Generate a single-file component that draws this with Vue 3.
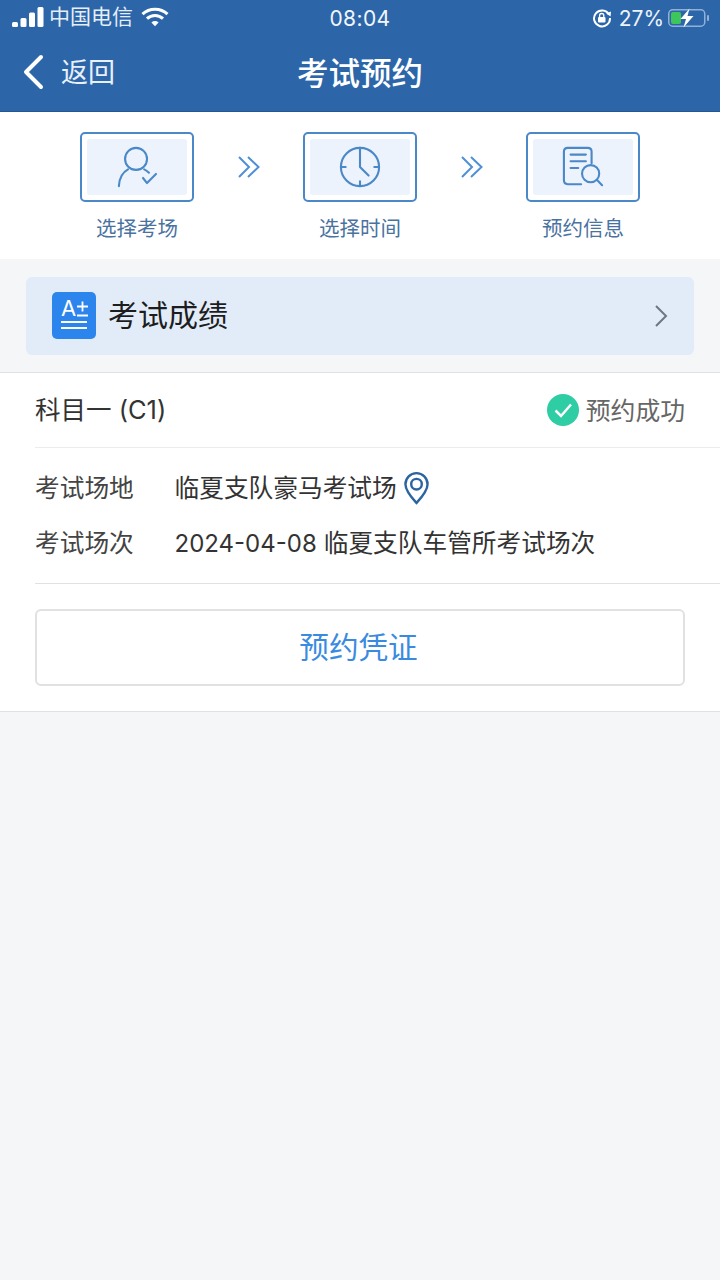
<template>
  <div class="page">
    <header class="topbar">
      <div class="status">
        <div class="status-left">
          <svg class="signal" width="32" height="20" viewBox="0 0 32 20">
            <rect x="0" y="15" width="6" height="5" rx="1.5" />
            <rect x="8.5" y="11" width="6" height="9" rx="1.5" />
            <rect x="17" y="5.5" width="6" height="14.5" rx="1.5" />
            <rect x="25.5" y="0" width="6" height="20" rx="1.5" />
          </svg>
          <span class="carrier">中国电信</span>
          <svg class="wifi" width="28" height="20" viewBox="0 0 28 20">
            <path d="M1.5 7.2C8.5 .6 19.5 .6 26.5 7.2" />
            <path d="M6 11.6C10.6 7.3 17.4 7.3 22 11.6" />
            <path d="M10.4 15.4C12.5 13.6 15.5 13.6 17.6 15.4L14 19.2Z" class="wifi-tip" />
          </svg>
        </div>
        <span class="clock">08:04</span>
        <div class="status-right">
          <svg class="lock" width="20" height="20" viewBox="0 0 20 20">
            <path d="M17 6.5A8 8 0 1 0 18 10" fill="none" stroke="#fff" stroke-width="2" />
            <path d="M14.2 5.4L19 3.4L18.6 8.6Z" fill="#fff" />
            <rect x="6" y="9" width="7.5" height="5.5" rx="1" fill="#fff" />
            <path d="M7.6 9V7.6a2.1 2.1 0 0 1 4.2 0V9" fill="none" stroke="#fff" stroke-width="1.3" />
          </svg>
          <span class="battery-pct">27%</span>
          <svg class="battery" width="42" height="20" viewBox="0 0 42 20">
            <rect x=".75" y="1.75" width="36" height="16.5" rx="4" fill="none" stroke="#8fb0d8" stroke-width="1.5" />
            <rect x="3" y="4" width="10" height="12" rx="2" fill="#3fc65a" />
            <rect x="39" y="7" width="2" height="6" rx="1" fill="#8fb0d8" />
            <path d="M21.5 0.5L12.5 11H18L15.5 19.5L25.5 8H19.5Z" fill="#fff" />
          </svg>
        </div>
      </div>
      <div class="navbar">
        <div class="back">
          <svg width="22" height="36" viewBox="0 0 22 36">
            <path d="M19 3L4 18L19 33" fill="none" stroke="#fff" stroke-width="4" stroke-linecap="round" stroke-linejoin="round" />
          </svg>
          <span>返回</span>
        </div>
        <h1>考试预约</h1>
      </div>
    </header>

    <section class="steps">
      <template v-for="(step, i) in steps" :key="step.label">
        <div class="step">
          <div class="tile">
            <div class="tile-inner">
              <svg v-if="step.icon === 'person'" width="44" height="44" viewBox="0 0 44 44" class="step-icon">
                <circle cx="21" cy="13.500" r="11.500" />
                <path d="M3 42C3.500 33 7 27.500 12.600 24.500" />
                <path d="M29.500 24.500C31.500 25.300 33 26.500 34.500 28" />
                <path d="M28.300 33.500L32.500 38.800L41.900 29.300" />
              </svg>
              <svg v-else-if="step.icon === 'clock'" width="44" height="44" viewBox="0 0 44 44" class="step-icon">
                <circle cx="22" cy="22" r="20" />
                <path d="M22 2V7M22 37V42M2 22H7M37 22H42" />
                <path d="M22 8V22L31 31" />
              </svg>
              <svg v-else width="44" height="44" viewBox="0 0 44 44" class="step-icon">
                <path d="M20 40H6C3.500 40 2 38.500 2 36V6C2 3.500 3.500 2 6 2H27C29.500 2 31 3.500 31 6V18" />
                <path d="M9 9H25M9 16H25M9 23H17" />
                <circle cx="30" cy="29" r="9" />
                <path d="M37 36L42 41" />
              </svg>
            </div>
          </div>
          <span class="step-label">{{ step.label }}</span>
        </div>
        <div v-if="i < steps.length - 1" class="step-arrow">
          <svg width="24" height="24" viewBox="0 0 24 24">
            <path d="M2 2L12 12L2 22M11 2L21.500 12L11 22" fill="none" stroke="#4f8fd6" stroke-width="2" />
          </svg>
        </div>
      </template>
    </section>

    <div class="score-wrap">
      <div class="score-banner">
        <div class="score-left">
          <div class="score-icon">
            <span class="grade">A</span>
            <svg class="plus" width="14" height="18" viewBox="0 0 14 18">
              <path d="M1 5.500H12M6.500 0.500V10.500M1 14.500H12" fill="none" stroke="#fff" stroke-width="1.800" />
            </svg>
            <i class="rule"></i>
            <i class="rule"></i>
          </div>
          <span class="score-title">考试成绩</span>
        </div>
        <svg width="14" height="24" viewBox="0 0 14 24">
          <path d="M2 2L12 12L2 22" fill="none" stroke="#6d7780" stroke-width="2" />
        </svg>
      </div>
    </div>

    <section class="record">
      <div class="record-head">
        <span class="subject">科目一 (C1)</span>
        <div class="state">
          <svg width="32" height="32" viewBox="0 0 32 32">
            <circle cx="16" cy="16" r="16" fill="#2fcda3" />
            <path d="M8.500 16.500L14 22L24 10.500" fill="none" stroke="#fff" stroke-width="2.500" />
          </svg>
          <span>预约成功</span>
        </div>
      </div>
      <div class="record-body">
        <div class="info-row">
          <span class="info-key">考试场地</span>
          <span class="info-val">临夏支队豪马考试场</span>
          <svg class="pin" width="25" height="34" viewBox="0 0 26 34">
            <path d="M13 32.500C8 27 1.500 20 1.500 13A11.500 11.500 0 0 1 24.500 13C24.500 20 18 27 13 32.500Z" fill="none" stroke="#2b65a0" stroke-width="2.500" />
            <circle cx="13" cy="13" r="5.500" fill="none" stroke="#2b65a0" stroke-width="2.500" />
          </svg>
        </div>
        <div class="info-row">
          <span class="info-key">考试场次</span>
          <span class="info-val"><span class="date">2024-04-08</span> 临夏支队车管所考试场次</span>
        </div>
      </div>
      <div class="record-foot">
        <button class="voucher" type="button">预约凭证</button>
      </div>
    </section>
  </div>
</template>

<script setup>
const steps = [
  { label: '选择考场', icon: 'person' },
  { label: '选择时间', icon: 'clock' },
  { label: '预约信息', icon: 'doc' },
]
</script>

<style>
html,
body {
  margin: 0;
  background: #f4f6f8;
}
</style>

<style scoped>
.page {
  width: 720px;
  min-height: 1280px;
  background: #f4f6f8;
  font-family: Inter, "Noto Sans CJK SC", sans-serif;
  color: #333;
}

.topbar {
  height: 111px;
  background: #2c66a9;
  color: #fff;
  border-bottom: 1px solid #24568f;
}

.status {
  height: 36px;
  padding: 0 10px;
  display: grid;
  grid-template-columns: 1fr auto 1fr;
  align-items: center;
}

.status-left,
.status-right {
  display: flex;
  align-items: center;
}

.status-left {
  padding-left: 2px;
}

.status-right {
  justify-content: flex-end;
}

.signal {
  fill: #fff;
  margin-top: -2px;
}

.carrier {
  margin-left: 5px;
  font-size: 21px;
  line-height: 30px;
  margin-top: -3px;
  color: #e6eef8;
}

.wifi {
  margin-left: 8px;
  margin-top: -3px;
  fill: none;
  stroke: #fff;
  stroke-width: 3;
}

.wifi-tip {
  fill: #fff;
  stroke: none;
}

.clock {
  font-size: 21px;
  letter-spacing: 0.4px;
  color: #f2f6fb;
}

.lock {
  margin-right: 7px;
  margin-left: 2px;
}

.battery-pct {
  font-size: 21px;
  color: #eef3fa;
}

.battery {
  margin-left: 4px;
}

.navbar {
  position: relative;
  height: 75px;
  display: flex;
  align-items: center;
  justify-content: center;
}

.back {
  position: absolute;
  left: 22px;
  top: 18px;
  display: flex;
  align-items: center;
  gap: 17px;
  font-size: 27px;
  color: #e8f0fa;
}

.back span {
  margin-top: -3px;
}

.navbar h1 {
  margin: -5px 0 0;
  font-size: 31.500px;
  font-weight: 500;
}

.steps {
  height: 147px;
  background: #fff;
  display: flex;
  justify-content: center;
  box-sizing: border-box;
  padding-top: 20px;
}

.step {
  width: 114px;
  display: flex;
  flex-direction: column;
  align-items: center;
}

.tile {
  width: 114px;
  height: 70px;
  box-sizing: border-box;
  border: 2px solid #4a88c8;
  border-radius: 5px;
  padding: 5px;
  background: #fff;
}

.tile-inner {
  height: 100%;
  background: #ecf3fc;
  border-radius: 3px;
  display: flex;
  align-items: center;
  justify-content: center;
}

.step-icon {
  fill: none;
  stroke: #4a88c8;
  stroke-width: 2.200;
  stroke-linecap: round;
  stroke-linejoin: round;
  width: 42px;
  height: 42px;
}

.step-label {
  margin-top: 13px;
  font-size: 20.500px;
  line-height: 27px;
  color: #4a729f;
  white-space: nowrap;
}

.step-arrow {
  width: 109px;
  height: 70px;
  display: flex;
  align-items: center;
  justify-content: center;
}

.score-wrap {
  padding: 18px 26px 17px;
}

.score-banner {
  height: 78px;
  padding: 0 26px;
  background: #e2ecf8;
  border-radius: 6px;
  display: flex;
  align-items: center;
  justify-content: space-between;
}

.score-left {
  display: flex;
  align-items: center;
  gap: 12px;
}

.score-icon {
  position: relative;
  width: 44px;
  height: 47px;
  margin-top: -2px;
  box-sizing: border-box;
  padding: 25px 9px 0;
  background: #2b85ec;
  border-radius: 5px;
}

.grade {
  position: absolute;
  left: 9px;
  top: 3px;
  font-size: 22px;
  line-height: 26px;
  color: #fff;
}

.plus {
  position: absolute;
  left: 24px;
  top: 9px;
}

.rule {
  display: block;
  height: 2px;
  background: #fff;
  margin-top: 4px;
}

.score-title {
  font-size: 30px;
  line-height: 40px;
  margin-top: -3px;
  color: #1d1d1f;
}

.record {
  background: #fff;
  border-top: 1px solid #dfe1e4;
  border-bottom: 1px solid #dfe1e4;
  height: 340px;
  box-sizing: border-box;
}

.record-head {
  height: 74px;
  margin-left: 35px;
  padding-right: 35px;
  display: flex;
  align-items: center;
  justify-content: space-between;
  border-bottom: 1px solid #ececee;
}

.subject {
  font-size: 25.500px;
  line-height: 32px;
  margin-top: -1px;
  color: #333;
}

.state {
  display: flex;
  align-items: center;
  gap: 7px;
  font-size: 24.800px;
  color: #666;
}

.state span {
  margin-top: -3px;
}

.record-body {
  margin-left: 35px;
  height: 136px;
  box-sizing: border-box;
  padding-top: 12px;
  border-bottom: 1px solid #dfe1e4;
}

.info-row {
  height: 55px;
  display: flex;
  align-items: center;
  font-size: 24.700px;
  color: #333;
}

.info-key,
.info-val {
  margin-top: -3px;
}

.info-key {
  width: 139.500px;
  color: #444;
}

.date {
  font-size: 24px;
}

.pin {
  margin-left: 7px;
}

.record-foot {
  padding: 25px 35px;
}

.voucher {
  display: block;
  width: 100%;
  height: 77px;
  padding: 0 3px 4px 0;
  background: #fff;
  border: 2px solid #e0e1e3;
  border-radius: 6px;
  font-family: inherit;
  font-size: 29.600px;
  color: #3a8be0;
}
</style>
